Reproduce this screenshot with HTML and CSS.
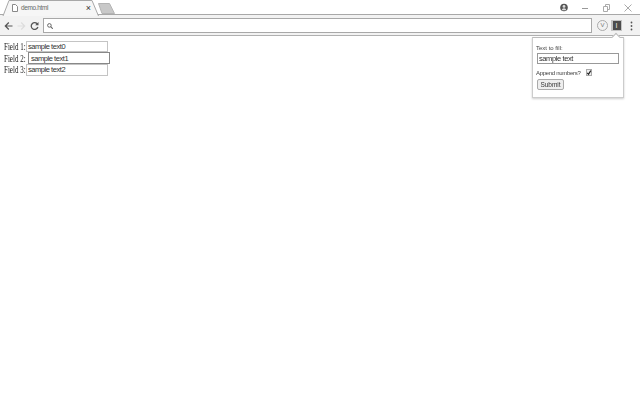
FILE: index.html
```html
<!DOCTYPE html>
<html lang="en">
<head>
<meta charset="utf-8">
<title>demo.html</title>
<link rel="stylesheet" href="styles.css">
</head>
<body>
<header class="chrome">
  <div class="tabstrip">
    <div class="tab">
      <svg class="tab-shape" width="99" height="16" viewBox="0 0 99 16"><path d="M3 16 L9 .5 H92 L98.500 16" fill="#f6f6f6" stroke="#a8a8a8"/></svg>
      <svg class="doc" width="6" height="8" viewBox="0 0 6 8"><path d="M.5 .5H3.500L5.500 2.500V7.500H.5Z" fill="#fff" stroke="#888"/></svg>
      <span class="tab-title">demo.html</span>
      <span class="tab-close">×</span>
    </div>
    <svg class="newtab" width="17" height="11" viewBox="0 0 17 11"><path d="M.5 .5H11.500L16.500 10.500H4Z" fill="#c8c8c8" stroke="#b4b4b4"/></svg>
    <div class="win">
      <svg width="8" height="9" viewBox="0 0 8 9"><circle cx="4" cy="4.500" r="3.800" fill="#555"/><circle cx="4" cy="3.400" r="1.400" fill="#ddd"/><path d="M1.800 7.300a2.200 2 0 0 1 4.400 0" fill="#ddd"/></svg>
      <svg width="7" height="8" viewBox="0 0 7 8"><path d="M0 4.500H6" stroke="#999"/></svg>
      <svg width="7" height="8" viewBox="0 0 7 8"><path d="M.5 2.500H4.500V7.500H.5ZM2.500 2.500V.5H6.500V5.500H4.500" fill="none" stroke="#aaa"/></svg>
      <svg width="8" height="8" viewBox="0 0 8 8"><path d="M.5 .5L7.500 7.500M7.500 .5L.5 7.500" stroke="#aaa"/></svg>
    </div>
  </div>
  <div class="toolbar">
    <svg class="nav" width="9" height="10" viewBox="0 0 9 10"><path d="M8.500 5H1.500M4.800 1.500L1.300 5L4.800 8.500" fill="none" stroke="#555" stroke-width="1.200"/></svg>
    <svg class="nav" width="9" height="10" viewBox="0 0 9 10"><path d="M.5 5H7.500M4.200 1.500L7.700 5L4.200 8.500" fill="none" stroke="#ddd" stroke-width="1.200"/></svg>
    <svg class="nav" width="9" height="10" viewBox="0 0 9 10"><path d="M7.500 3.200A3.400 3.400 0 1 0 7.900 6" fill="none" stroke="#555" stroke-width="1.300"/><path d="M8.500 1V4.300H5.200Z" fill="#555"/></svg>
    <div class="omnibox">
      <svg width="6" height="6" viewBox="0 0 6 6"><circle cx="2.400" cy="2.400" r="1.800" fill="none" stroke="#666"/><path d="M3.700 3.700L5.800 5.800" stroke="#666" stroke-width="1.100"/></svg>
    </div>
    <div class="ext-v">V</div>
    <div class="ext-i"><span>I</span></div>
    <svg class="menu" width="3" height="10" viewBox="0 0 3 10"><circle cx="1.500" cy="1.500" r=".9" fill="#555"/><circle cx="1.500" cy="5" r=".9" fill="#555"/><circle cx="1.500" cy="8.500" r=".9" fill="#555"/></svg>
  </div>
</header>
<main class="page">
  <div class="row"><label>Field 1:</label><input class="field" value="sample text0"></div>
  <div class="row"><label>Field 2:</label><input class="field focus" value="sample text1"></div>
  <div class="row"><label>Field 3:</label><input class="field" value="sample text2"></div>
</main>
<aside class="popup">
  <div class="popup-label">Text to fill:</div>
  <input class="popup-input" value="sample text">
  <div class="append"><span>Append numbers?</span>
    <svg class="check" width="6" height="7" viewBox="0 0 6 7"><rect x=".5" y=".5" width="5" height="6" fill="#eee" stroke="#aaa"/><path d="M1.300 3.800L2.500 5.200L4.800 1.600" fill="none" stroke="#222" stroke-width="1.200"/></svg>
  </div>
  <button class="submit">Submit</button>
</aside>
</body>
</html>
```
FILE: styles.css
```css
html, body { margin: 0; padding: 0; background: #fff; }
body { width: 640px; height: 400px; overflow: hidden; position: relative; font-family: "Liberation Serif", serif; }
.chrome { height: 36px; border-bottom: 1px solid #b0b0b0; box-sizing: border-box; background: #f2f2f2; font-family: "Liberation Sans", sans-serif; opacity: .999; }
.tabstrip { height: 14px; display: flex; align-items: flex-start; border-bottom: 1px solid #a8a8a8; background: #fff; }
.tab { position: relative; width: 98px; height: 15px; flex: none; display: flex; align-items: center; padding: 0 7px 0 12px; box-sizing: border-box; z-index: 1; }
.tab-shape { position: absolute; left: 0; top: 0; }
.doc, .tab-title, .tab-close { position: relative; }
.tab-title { font: 6.500px "Liberation Sans", sans-serif; letter-spacing: -.35px; color: #666; margin-left: 3px; flex: 1; }
.tab-close { font-size: 9px; line-height: 10px; color: #333; }
.newtab { margin-top: 3px; flex: none; }
.win { margin-left: auto; display: flex; align-items: center; gap: 14px; padding: 3px 8px 0 0; }
.toolbar { height: 19px; display: flex; align-items: center; padding: 1px 5px 0 4px; gap: 4px; }
.nav { flex: none; }
.omnibox { width: 549px; height: 15px; box-sizing: border-box; border: 1px solid #a8a8a8; background: #fff; display: flex; align-items: center; padding-left: 3px; flex: none; }
.ext-v { width: 9px; height: 9px; border: 1px solid #aaa; border-radius: 50%; font-size: 6px; line-height: 9px; text-align: center; color: #777; margin-left: 1px; flex: none; }
.ext-i { width: 11px; height: 11px; background: #c4c4c4; display: flex; align-items: center; justify-content: center; flex: none; margin-left: -1px; }
.ext-i span { width: 8px; height: 9px; background: #4c4c4c; color: #eee; font-size: 7px; line-height: 9px; text-align: center; }
.menu { flex: none; margin-left: 3.500px; }
.page { padding-top: 4.700px; opacity: .999; }
.row { display: flex; align-items: center; height: 11.700px; padding-left: 4px; font-size: 10px; color: #222; }
.row label { white-space: nowrap; width: 22px; flex: none; transform: scaleX(.7); transform-origin: left center; }
.field { width: 82px; height: 11.500px; box-sizing: border-box; margin: 0; padding: 0 1px; border: 1px solid #c4c4c4; font: 7.500px "Liberation Sans", sans-serif; letter-spacing: -.45px; color: #333; background: #fff; }
.focus { border-color: #888; margin-left: 2px; padding-left: 2px; }
.popup { position: absolute; left: 532px; top: 37px; width: 92px; height: 61px; box-sizing: border-box; background: #fff; border: 1px solid #ccc; border-top-color: #bbb; box-shadow: 0 1px 2px rgba(0,0,0,.2); padding: 7px 3px 0; font: 6px "Liberation Sans", sans-serif; color: #444; opacity: .999; }
.popup::before { content: ""; position: absolute; right: 4px; top: -4px; width: 5px; height: 5px; background: #fff; border-left: 1px solid #bbb; border-top: 1px solid #bbb; transform: rotate(45deg); }
.popup-label { line-height: 7px; }
.popup-input { display: block; width: 82px; height: 11px; box-sizing: border-box; margin: 1px 0 0 1px; padding: 0 1px; border: 1px solid #999; font: 7.500px "Liberation Sans", sans-serif; letter-spacing: -.4px; color: #333; }
.append { display: flex; align-items: center; gap: 5px; margin-top: 5px; height: 8px; letter-spacing: -.3px; }
.check { flex: none; margin-top: -2px; }
.submit { display: block; margin: 2px 0 0 1px; width: 27px; height: 11px; padding: 0; border: 1px solid #aaa; border-radius: 2px; background: #eee; font: 6.500px "Liberation Sans", sans-serif; color: #333; }
```
